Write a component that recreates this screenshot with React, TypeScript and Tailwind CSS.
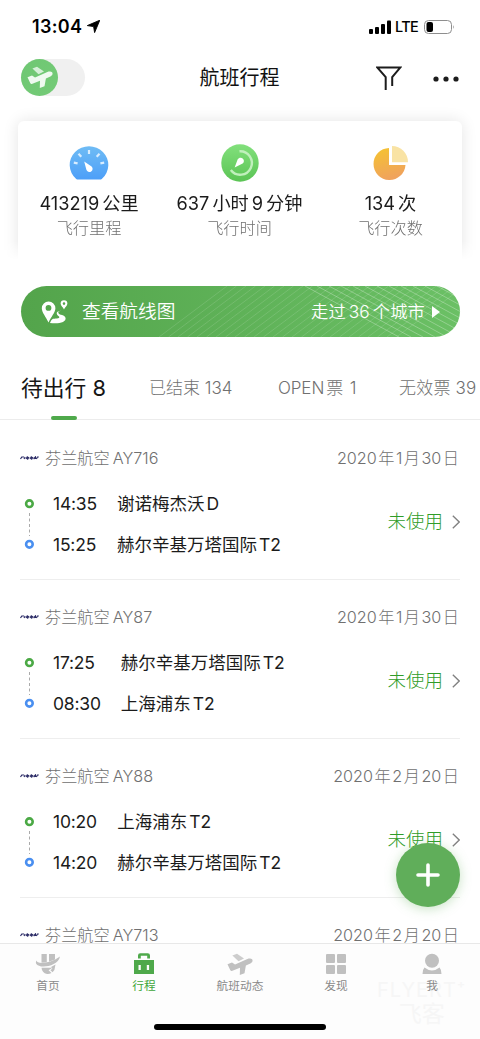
import React from 'react';

interface Stop {
  time: string;
  place: string;
}

interface Flight {
  code: string;
  date: string;
  stops: Stop[];
}

const flights: Flight[] = [
  {
    code: '芬兰航空AY716',
    date: '2020年1月30日',
    stops: [
      { time: '14:35', place: '谢诺梅杰沃D' },
      { time: '15:25', place: '赫尔辛基万塔国际T2' },
    ],
  },
  {
    code: '芬兰航空AY87',
    date: '2020年1月30日',
    stops: [
      { time: '17:25', place: '赫尔辛基万塔国际T2' },
      { time: '08:30', place: '上海浦东T2' },
    ],
  },
  {
    code: '芬兰航空AY88',
    date: '2020年2月20日',
    stops: [
      { time: '10:20', place: '上海浦东T2' },
      { time: '14:20', place: '赫尔辛基万塔国际T2' },
    ],
  },
  {
    code: '芬兰航空AY713',
    date: '2020年2月20日',
    stops: [],
  },
];

// Splits a label into Latin and Chinese runs with a small gap between them
const Mixed: React.FC<{ text: string; gap?: string }> = ({ text, gap = 'gap-[3px]' }) => {
  const runs = text.match(/[\x00-\x7F]+|[^\x00-\x7F]+/g) || [];
  return (
    <span className={`inline-flex items-baseline whitespace-pre ${gap}`}>
      {runs.map((run, i) => (
        <span key={i}>{run}</span>
      ))}
    </span>
  );
};

const PlaneIcon: React.FC<{ className?: string }> = ({ className }) => (
  <svg viewBox="0 0 26 22" className={className} fill="currentColor">
    <path d="M0.5 11.3 L5 9.6 L8 11.6 L21.5 5.6 Q25 4.8 25.6 7 Q26 9.2 23.4 10.4 L18.9 12.5 L17.5 20.3 L12.8 22 L13 14.8 L4.8 18 Q3.8 18.2 3.2 17 Z" />
    <path d="M5.4 2.6 L10 0.8 L17 5.6 L11.5 8.2 Z" opacity="0.8" />
  </svg>
);

const StatusBar = () => (
  <div className="flex h-[53px] shrink-0 items-center justify-between pl-8 pr-[25px] text-black">
    <div className="flex items-center gap-[5px]">
      <span className="text-[18px] font-semibold tracking-[0.3px]">13:04</span>
      <svg viewBox="0 0 13 13" className="size-[13px]">
        <path d="M12.8 0.2 L7.6 12.6 L6.6 6.6 L0.3 5.6 Z" fill="#000" stroke="#000" strokeWidth="0.9" strokeLinejoin="round" />
      </svg>
    </div>
    <div className="flex items-center">
      <svg viewBox="0 0 22 14" className="h-[14px] w-[22px]">
        <rect x="0" y="9" width="4" height="5" rx="1" />
        <rect x="6" y="7" width="4" height="7" rx="1" />
        <rect x="12" y="4" width="4" height="10" rx="1" />
        <rect x="18" y="0.5" width="4" height="13.5" rx="1" />
      </svg>
      <span className="ml-1 text-[14.5px] font-medium tracking-[-0.7px]">LTE</span>
      <svg viewBox="0 0 31 14" className="ml-[6px] h-[14px] w-[31px]">
        <rect x="0.5" y="0.5" width="27" height="13" rx="4" fill="none" stroke="#8e8e8e" />
        <rect x="2.5" y="2" width="6.5" height="10" rx="2" />
        <path d="M29 5 Q30.6 7 29 9 Z" fill="#8e8e8e" />
      </svg>
    </div>
  </div>
);

const Header = () => (
  <div className="flex h-[48px] shrink-0 items-center justify-between pl-[21px] pr-[21px]">
    <div className="h-[37px] w-16 rounded-full bg-[#f0f0f0]">
      <div className="flex size-[37px] items-center justify-center rounded-full bg-linear-to-br from-[#6fc773] to-[#74cb77]">
        <PlaneIcon className="h-[22px] w-[26px] text-[#effaf0]" />
      </div>
    </div>
    <h1 className="ml-[18px] pt-px text-[20px] text-[#111]">航班行程</h1>
    <div className="flex items-center gap-[31px]">
      <svg viewBox="0 0 26 24" className="h-6 w-[26px] translate-y-px" fill="none" stroke="#1c1c1c" strokeWidth="2">
        <path d="M9.7 24 V11.2 L1.5 1.6 H24.2 L16.2 11.2 V20" />
      </svg>
      <svg viewBox="0 0 26 6" className="h-[6px] w-[26px] translate-y-0.5" fill="#1c1c1c">
        <circle cx="3" cy="3" r="2.6" />
        <circle cx="13" cy="3" r="2.6" />
        <circle cx="23" cy="3" r="2.6" />
      </svg>
    </div>
  </div>
);

const GaugeIcon = () => (
  <svg viewBox="0 0 40 40" className="size-10">
    <defs>
      <linearGradient id="gauge" x1="0" y1="0" x2="0" y2="1">
        <stop offset="0" stopColor="#6fbcf5" />
        <stop offset="1" stopColor="#4d9ff8" />
      </linearGradient>
    </defs>
    <path d="M7.2 36 A19.3 18.8 0 1 1 32.8 36 Q32.4 36.4 31.8 36.4 H8.2 Q7.6 36.4 7.2 36 Z" fill="url(#gauge)" />
    <g stroke="#d9edff" strokeWidth="2.2">
      <path d="M20 7 V11" />
      <path d="M9.5 10.8 L12.3 13.8" />
      <path d="M30.5 10.8 L27.7 13.8" />
      <path d="M4.8 19.7 L8.6 20.4" />
      <path d="M35.2 19.7 L31.4 20.4" />
    </g>
    <path d="M15.2 18.5 L22.6 23.4 A3.2 3.2 0 1 1 17.4 26.8 Z" fill="#fff" />
  </svg>
);

const TimeIcon = () => (
  <svg viewBox="0 0 40 40" className="size-10">
    <defs>
      <linearGradient id="clock" x1="0" y1="0" x2="0" y2="1">
        <stop offset="0" stopColor="#82e07c" />
        <stop offset="1" stopColor="#5bc455" />
      </linearGradient>
    </defs>
    <circle cx="20" cy="20" r="18.7" fill="url(#clock)" />
    <path d="M19.5 8.3 A11.7 11.7 0 1 1 10.8 27" fill="none" stroke="#c0f0bc" strokeWidth="2.4" />
    <path d="M14.6 24.4 L17.6 16.6 A3.3 3.3 0 1 1 22.6 20.6 Z" fill="#fff" />
  </svg>
);

const PieIcon = () => (
  <svg viewBox="0 0 40 40" className="size-10">
    <defs>
      <linearGradient id="pie" x1="0" y1="0" x2="0.3" y2="1">
        <stop offset="0" stopColor="#f5c42f" />
        <stop offset="1" stopColor="#f0a35c" />
      </linearGradient>
    </defs>
    <path d="M18 5 V22 H34.5 A16 16 0 1 1 18 5 Z" fill="url(#pie)" />
    <path d="M21 3 A16 16 0 0 1 37 19.2 H21 Z" fill="#f9e3a4" />
  </svg>
);

const stats = [
  { icon: <GaugeIcon />, value: '413219公里', label: '飞行里程' },
  { icon: <TimeIcon />, value: '637小时9分钟', label: '飞行时间' },
  { icon: <PieIcon />, value: '134次', label: '飞行次数' },
];

const StatsCard = () => (
  <div className="h-[159px] shrink-0 overflow-hidden px-[18px] pt-5 [mask-image:linear-gradient(to_bottom,#000_88%,transparent)]">
    <div className="grid h-[180px] grid-cols-[142px_159px_143px] rounded-md bg-white pt-[22px] shadow-[0_0_16px_rgba(0,0,0,0.11)]">
      {stats.map((s) => (
        <div key={s.label} className="flex flex-col items-center">
          {s.icon}
          <div className="mt-[6px] h-7 text-[18.2px] leading-7 text-[#1b1b1b]">
            <Mixed text={s.value} />
          </div>
          <div className="text-[16.2px] font-light leading-[22px] text-[#707070]">{s.label}</div>
        </div>
      ))}
    </div>
  </div>
);

const leftLines = Array.from({ length: 26 }, (_, i) => 138 + i * 9.5);
const rightLines = Array.from({ length: 15 }, (_, i) => 284 + i * 12);

const RouteBanner = () => (
  <div className="relative mr-5 ml-[21px] flex h-[51px] shrink-0 items-center overflow-hidden rounded-full bg-linear-to-r from-[#53a44b] to-[#6bc065] px-5 text-white">
    <svg viewBox="0 0 439 51" className="absolute inset-0 h-full w-full" stroke="#fff">
      {leftLines.map((x) => (
        <path key={x} d={`M${x} 51 L${x + 68} 0`} strokeOpacity="0.13" />
      ))}
      {rightLines.map((x) => (
        <path key={x} d={`M${x} 0 L${x + 94} 51`} strokeOpacity="0.28" />
      ))}
    </svg>
    <svg viewBox="0 0 28 24" className="relative h-6 w-7" fill="#fff" fillRule="evenodd">
      <path d="M7.5 22.5 C5 17 0.8 12.5 0.8 8.3 A6.8 6.8 0 0 1 14.4 8.3 C14.4 12.5 10 17 7.5 22.5 Z M7.5 5 A2.9 2.9 0 1 0 7.5 10.8 A2.9 2.9 0 1 0 7.5 5 Z" />
      <path d="M23 9.5 C22 7 19.6 6 19.6 3.6 A3.4 3.4 0 0 1 26.4 3.6 C26.4 6 24 7 23 9.5 Z M23 2.3 A1.3 1.3 0 1 0 23 4.9 A1.3 1.3 0 1 0 23 2.3 Z" />
      <path d="M22.3 10.5 C15 10.8 17 14 20 14.8 C25.5 16 26 20 22 22 C18.5 23.6 13 23.2 9 23 C10 21 10.5 19.5 12 18.8 C16 18.8 19.5 18.3 18 16.6 C14.5 14 14.5 10.6 22.3 10.5 Z" />
    </svg>
    <span className="relative ml-[13px] pt-0.5 text-[18.7px] font-[350]">查看航线图</span>
    <div className="relative ml-auto flex items-center gap-[7px] text-[17.3px] font-[350]">
      <span className="tracking-[0.1px]"><Mixed text="走过36个城市" /></span>
      <svg viewBox="0 0 8 12" className="h-3 w-2" fill="#fff">
        <path d="M0 0 L8 6 L0 12 Z" />
      </svg>
    </div>
  </div>
);

const Tabs = () => (
  <div className="flex h-[83px] w-[500px] shrink-0 items-center whitespace-nowrap border-b border-[#ececec] pl-[21px] pt-[21px] text-[17px] font-light text-[#707070]">
    <div className="relative flex h-full w-[128px] items-center text-[21.8px] font-normal text-[#161616]">
      待出行 8
      <div className="absolute -bottom-px left-[30px] h-1 w-[26px] rounded-sm bg-[#4fa94b]" />
    </div>
    <div className="w-[129px]">已结束 134</div>
    <div className="w-[121px] tracking-[-0.1px]"><Mixed text="OPEN票 1" gap="gap-[2px]" /></div>
    <div className="tracking-[0.2px]">无效票 39</div>
  </div>
);

const FlightRow: React.FC<{ flight: Flight }> = ({ flight }) => (
  <div className="mx-5 h-[159px] shrink-0 border-b border-[#eeeeee] pt-[24px]">
    <div className="flex h-[26px] items-center text-[16.2px] font-light text-[#707070]">
      <svg viewBox="0 0 19 4" className="mr-[6px] h-1 w-[19px]" fill="none" stroke="#2b2b66">
        <path
          d="M0.5 3 L1.8 1 H4 M4 3 L5.2 1 M6 3 L7.2 1 L7.8 3 L9 1 M10 3 L11.2 1 L11.8 3 L13 1 M13.6 3 L15.4 1 V3 M16.4 3 L17.4 1 H18.8"
          strokeWidth="1.2"
        />
      </svg>
      <Mixed text={flight.code} gap="gap-[3px]" />
      <span className="ml-auto pr-px"><Mixed text={flight.date} gap="gap-[1.5px]" /></span>
    </div>
    {flight.stops.length > 0 && (
      <div className="mt-[12px] flex items-center">
        <svg viewBox="0 0 10 50" className="ml-1 h-[50px] w-[10px]" fill="none" strokeWidth="2.6">
          <circle cx="5.4" cy="4.7" r="3.3" stroke="#4ba945" />
          <path d="M5.5 14 V37" stroke="#aaa" strokeWidth="1" strokeDasharray="3 2.5" />
          <circle cx="5.4" cy="45.3" r="3.3" stroke="#4a8ff0" />
        </svg>
        <div className="ml-[19px] grid grid-cols-[auto_auto] gap-x-5 text-[17.5px] leading-[41px] text-[#1b1b1b]">
          {flight.stops.map((s) => (
            <React.Fragment key={s.time}>
              <span className="tracking-[-0.2px]">{s.time}</span>
              <Mixed text={s.place} gap="gap-[2px]" />
            </React.Fragment>
          ))}
        </div>
        <div className="mb-[4px] ml-auto flex items-center gap-[9px] text-[18.5px] font-light text-[#2f9c28]">
          未使用
          <svg viewBox="0 0 8 14" className="h-[14px] w-2" fill="none" stroke="#808080" strokeWidth="1.3">
            <path d="M0.8 0.8 L7.2 7 L0.8 13.2" />
          </svg>
        </div>
      </div>
    )}
  </div>
);

const navItems = [
  {
    label: '首页',
    icon: (
      <svg viewBox="0 0 26 24" className="h-6 w-[26px]" fill="currentColor">
        <path d="M6.5 2 H11.8 V10.3 L6.5 10.8 Z" />
        <path d="M14 2 H20 V7.6 L14 9.8 Z" />
        <path d="M1.5 8.6 C1.5 12 14 12.5 25 4.6 C23.5 12.5 12 15.5 6 14.4 C0.5 13.4 0.3 10.5 1.5 8.6 Z" />
        <path d="M6.5 15.8 H17.5 L13.6 18.2 L16.5 21 Q14 22.4 12 22 C8.5 21.4 6.8 19 6.5 15.8 Z" />
        <path d="M16 15 L20.5 12.6 L19.4 18 L17.6 20.2 L15.4 18.2 L17.4 16.6 Z" />
      </svg>
    ),
  },
  {
    label: '行程',
    active: true,
    icon: (
      <svg viewBox="0 0 26 24" className="h-6 w-[26px]" fill="currentColor" fillRule="evenodd">
        <path d="M7 6.5 V3.5 Q7 1.2 9.3 1.2 H16.7 Q19 1.2 19 3.5 V6.5 H16.2 V3.8 H9.8 V6.5 Z" />
        <path d="M3 8 H23 V22 H3 Z M7.5 13 V18 H9.8 V13 Z M15.8 13 V18 H18.1 V13 Z" />
      </svg>
    ),
  },
  { label: '航班动态', icon: <PlaneIcon className="h-[22px] w-[26px]" /> },
  {
    label: '发现',
    icon: (
      <svg viewBox="0 0 26 24" className="h-6 w-[26px]" fill="currentColor">
        <rect x="3" y="2" width="9" height="9" rx="1" />
        <rect x="14" y="2" width="9" height="9" rx="1" />
        <rect x="3" y="13" width="9" height="9" rx="1" />
        <rect x="14" y="13" width="9" height="9" rx="1" />
      </svg>
    ),
  },
  {
    label: '我',
    icon: (
      <svg viewBox="0 0 26 24" className="h-6 w-[26px]" fill="currentColor">
        <circle cx="13" cy="8.8" r="7" />
        <path d="M5.5 15.5 Q13 21.5 20.5 15.5 Q22.5 17.5 22.5 22 H3.5 Q3.5 17.5 5.5 15.5 Z" />
      </svg>
    ),
  },
];

const NavBar = () => (
  <div className="relative flex h-[96px] shrink-0 flex-col items-center border-t border-[#e8e8e8] bg-[#fdfdfd]">
    <div className="absolute left-[377px] top-[34px] flex flex-col items-center leading-[24px] text-[#f6f6f6]">
      <span className="text-[20px] tracking-[1px]">FLYERT⁺</span>
      <span className="text-[23px]">飞客</span>
    </div>
    <div className="relative grid w-full grid-cols-5">
      {navItems.map((item) => (
        <div
          key={item.label}
          className={`flex flex-col items-center pt-[8px] ${item.active ? 'text-[#4fa94b]' : 'text-[#c0c0c0]'}`}
        >
          <div className="flex h-6 items-center">{item.icon}</div>
          <span className={`text-[11.7px] leading-[21px] ${item.active ? 'text-[#3fa63a]' : 'text-[#8a8a8a]'}`}>
            {item.label}
          </span>
        </div>
      ))}
    </div>
    <div className="mt-auto mb-[9px] h-[6px] w-[172px] rounded-full bg-black" />
  </div>
);

const App = () => {
  return (
    <div className="relative flex h-[1039px] w-[480px] flex-col overflow-hidden bg-white font-['Inter','Noto_Sans_CJK_SC',sans-serif]">
      <StatusBar />
      <Header />
      <StatsCard />
      <div className="h-[26px] shrink-0" />
      <RouteBanner />
      <Tabs />
      <div className="flex min-h-0 flex-1 flex-col overflow-hidden pt-px">
        {flights.map((f) => (
          <FlightRow key={f.code} flight={f} />
        ))}
      </div>
      <NavBar />
      <button className="absolute left-[396px] top-[843px] flex size-16 items-center justify-center rounded-full bg-[#60ae5a] shadow-[0_2px_12px_rgba(96,174,90,0.35)]">
        <svg viewBox="0 0 24 24" className="size-6" stroke="#fff" strokeWidth="3.6" strokeLinecap="round">
          <path d="M12 2 V22 M2 12 H22" />
        </svg>
      </button>
    </div>
  );
};

export default App;
